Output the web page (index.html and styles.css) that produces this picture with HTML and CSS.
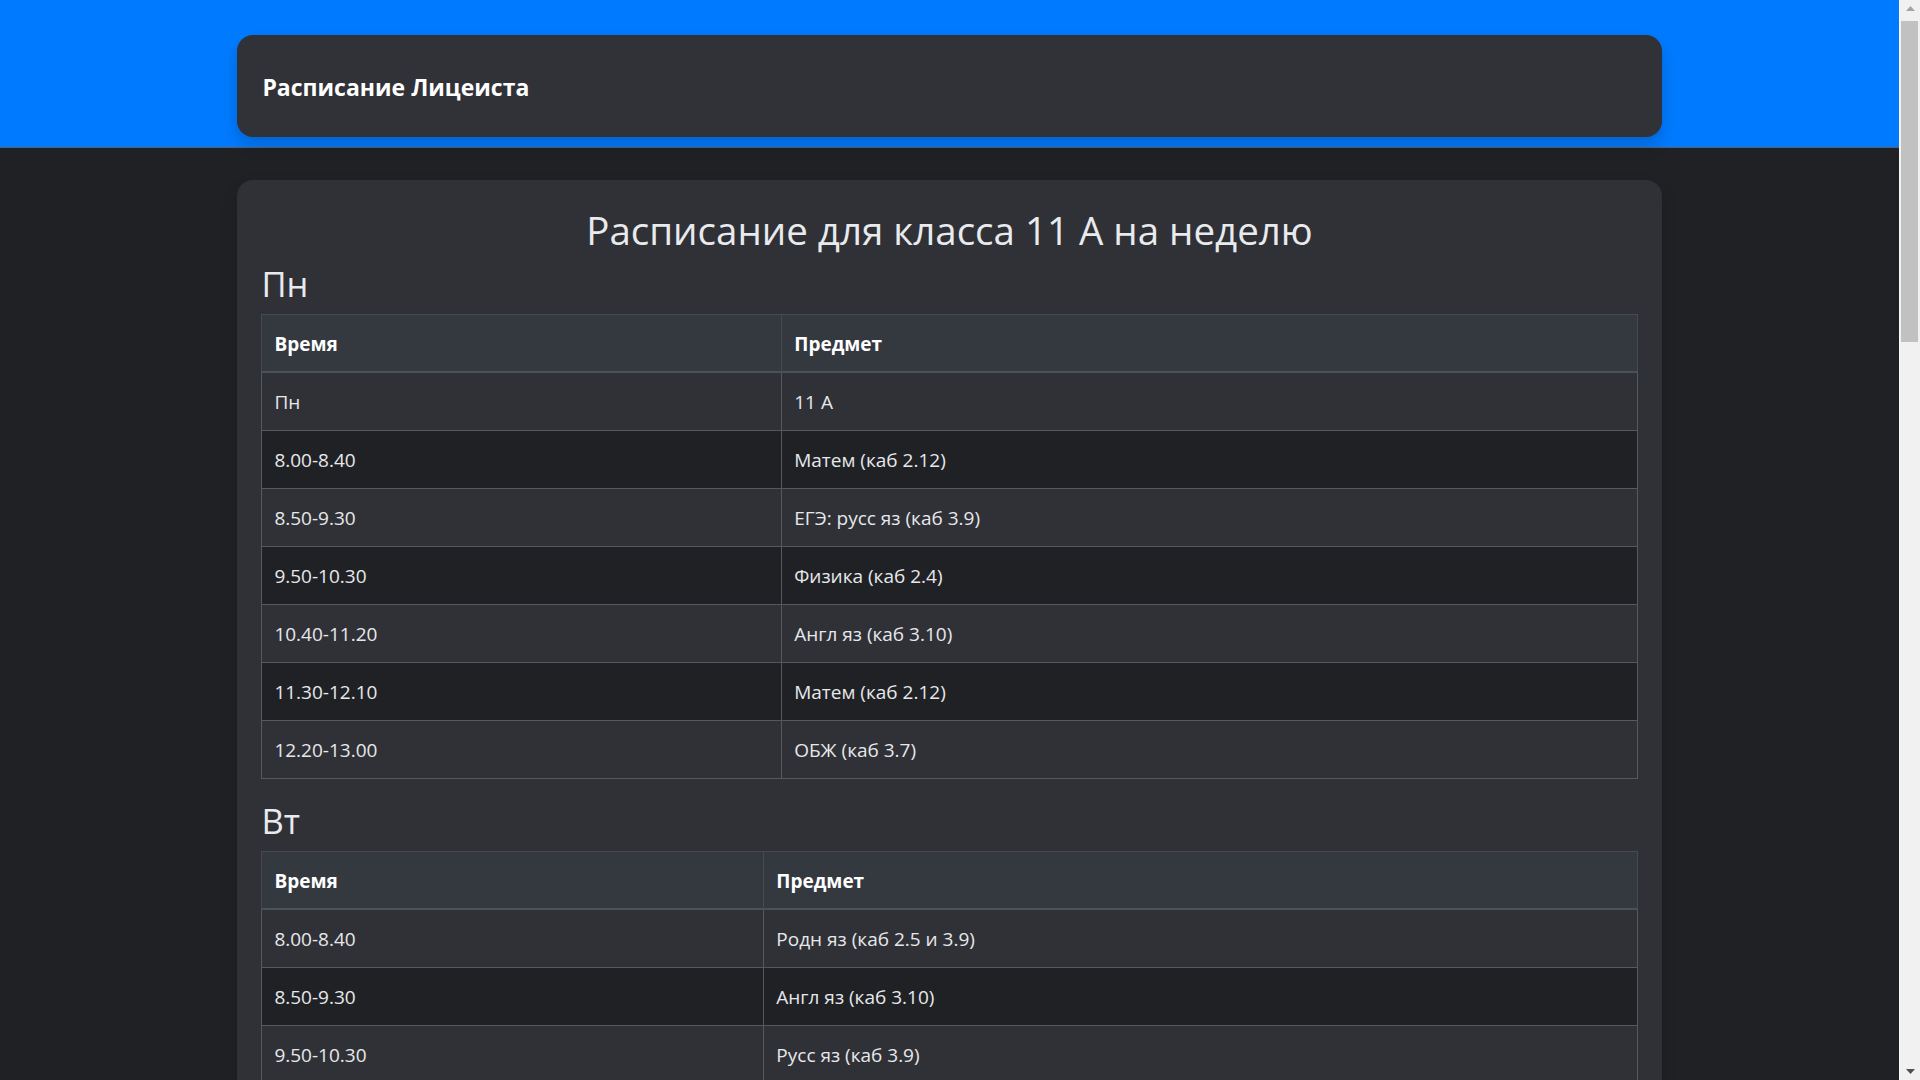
FILE: index.html
```html
<!DOCTYPE html>
<html lang="ru">
<head>
<meta charset="utf-8">
<title>Расписание Лицеиста</title>
<link rel="stylesheet" href="styles.css">
</head>
<body>
<div class="viewport">
<div class="page">
<header class="topbar">
  <div class="brand-card">
    <span class="brand">Расписание Лицеиста</span>
  </div>
</header>
<main class="sheet">
  <h1 class="title">Расписание для класса 11 А на неделю</h1>

  <h2 class="day">Пн</h2>
  <table class="sched">
    <colgroup><col class="c-mon"><col></colgroup>
    <thead><tr><th>Время</th><th>Предмет</th></tr></thead>
    <tbody>
      <tr><td>Пн</td><td>11 А</td></tr>
      <tr><td>8.00-8.40</td><td>Матем (каб 2.12)</td></tr>
      <tr><td>8.50-9.30</td><td>ЕГЭ: русс яз (каб 3.9)</td></tr>
      <tr><td>9.50-10.30</td><td>Физика (каб 2.4)</td></tr>
      <tr><td>10.40-11.20</td><td>Англ яз (каб 3.10)</td></tr>
      <tr><td>11.30-12.10</td><td>Матем (каб 2.12)</td></tr>
      <tr><td>12.20-13.00</td><td>ОБЖ (каб 3.7)</td></tr>
    </tbody>
  </table>

  <h2 class="day">Вт</h2>
  <table class="sched">
    <colgroup><col class="c-tue"><col></colgroup>
    <thead><tr><th>Время</th><th>Предмет</th></tr></thead>
    <tbody>
      <tr><td>8.00-8.40</td><td>Родн яз (каб 2.5 и 3.9)</td></tr>
      <tr><td>8.50-9.30</td><td>Англ яз (каб 3.10)</td></tr>
      <tr><td>9.50-10.30</td><td>Русс яз (каб 3.9)</td></tr>
      <tr><td>10.40-11.20</td><td>Матем (каб 2.12)</td></tr>
      <tr><td>11.30-12.10</td><td>История (каб 3.5)</td></tr>
      <tr><td>12.20-13.00</td><td>Физра</td></tr>
    </tbody>
  </table>

  <h2 class="day">Ср</h2>
  <table class="sched">
    <colgroup><col class="c-tue"><col></colgroup>
    <thead><tr><th>Время</th><th>Предмет</th></tr></thead>
    <tbody>
      <tr><td>8.00-8.40</td><td>Химия (каб 2.6)</td></tr>
      <tr><td>8.50-9.30</td><td>Матем (каб 2.12)</td></tr>
      <tr><td>9.50-10.30</td><td>Литература (каб 3.9)</td></tr>
      <tr><td>10.40-11.20</td><td>Биология (каб 2.7)</td></tr>
      <tr><td>11.30-12.10</td><td>Информатика (каб 3.1)</td></tr>
      <tr><td>12.20-13.00</td><td>Обществознание (каб 3.5)</td></tr>
    </tbody>
  </table>

  <h2 class="day">Чт</h2>
  <table class="sched">
    <colgroup><col class="c-tue"><col></colgroup>
    <thead><tr><th>Время</th><th>Предмет</th></tr></thead>
    <tbody>
      <tr><td>8.00-8.40</td><td>Физика (каб 2.4)</td></tr>
      <tr><td>8.50-9.30</td><td>Матем (каб 2.12)</td></tr>
      <tr><td>9.50-10.30</td><td>Англ яз (каб 3.10)</td></tr>
      <tr><td>10.40-11.20</td><td>Русс яз (каб 3.9)</td></tr>
      <tr><td>11.30-12.10</td><td>География (каб 3.4)</td></tr>
      <tr><td>12.20-13.00</td><td>Физра</td></tr>
    </tbody>
  </table>

  <h2 class="day">Пт</h2>
  <table class="sched">
    <colgroup><col class="c-tue"><col></colgroup>
    <thead><tr><th>Время</th><th>Предмет</th></tr></thead>
    <tbody>
      <tr><td>8.00-8.40</td><td>Литература (каб 3.9)</td></tr>
      <tr><td>8.50-9.30</td><td>Матем (каб 2.12)</td></tr>
      <tr><td>9.50-10.30</td><td>История (каб 3.5)</td></tr>
      <tr><td>10.40-11.20</td><td>Химия (каб 2.6)</td></tr>
      <tr><td>11.30-12.10</td><td>Англ яз (каб 3.10)</td></tr>
      <tr><td>12.20-13.00</td><td>Астрономия (каб 2.4)</td></tr>
    </tbody>
  </table>

  <h2 class="day">Сб</h2>
  <table class="sched">
    <colgroup><col class="c-tue"><col></colgroup>
    <thead><tr><th>Время</th><th>Предмет</th></tr></thead>
    <tbody>
      <tr><td>8.00-8.40</td><td>Матем (каб 2.12)</td></tr>
      <tr><td>8.50-9.30</td><td>Физика (каб 2.4)</td></tr>
      <tr><td>9.50-10.30</td><td>Информатика (каб 3.1)</td></tr>
      <tr><td>10.40-11.20</td><td>Русс яз (каб 3.9)</td></tr>
      <tr><td>11.30-12.10</td><td>Обществознание (каб 3.5)</td></tr>
    </tbody>
  </table>
</main>
</div>
<div class="scrollbar" aria-hidden="true">
  <div class="sb-btn"><svg width="9" height="5" viewBox="0 0 9 5"><polygon points="4.5,0 9,5 0,5" fill="#a3a3a3"/></svg></div>
  <div class="sb-track">
    <div class="sb-thumb"></div>
  </div>
  <div class="sb-btn"><svg width="9" height="5" viewBox="0 0 9 5"><polygon points="0,0 9,0 4.5,5" fill="#505050"/></svg></div>
</div>
</div>
</body>
</html>
```

FILE: styles.css
```css
html, body {
  margin: 0;
  padding: 0;
  height: 100%;
  overflow: hidden;
}

body {
  background: #202125;
  color: #dee2e6;
  font-family: "Open Sans", "Noto Sans", "Liberation Sans", sans-serif;
  font-size: 16px;
  line-height: 1.5;
}

.viewport {
  display: flex;
  height: 100vh;
}

.page {
  flex: 1;
  min-width: 0;
  overflow: hidden;
}

.scrollbar {
  width: 21px;
  flex: none;
  background: #f1f1f1;
  border-left: 1px solid #f8f8f8;
  box-sizing: border-box;
  display: flex;
  flex-direction: column;
}

.sb-btn {
  height: 17px;
  display: flex;
  align-items: center;
  justify-content: center;
}

.sb-track {
  flex: 1;
  padding: 4px 2px 0 1px;
}

.sb-thumb {
  height: 321px;
  background: #c1c1c1;
}

.topbar {
  background: #007bff;
  padding: 35px 0 10px;
  border-bottom: 1px solid #5a5f66;
}

.brand-card {
  width: 75%;
  margin: 0 auto;
  box-sizing: border-box;
  background: #313237;
  border-radius: 16px;
  padding: 3px 25px 0;
  height: 102px;
  display: flex;
  align-items: center;
  box-shadow: 0 8px 16px rgba(0, 0, 0, 0.18);
}

.brand {
  color: #ffffff;
  font-size: 23px;
  font-weight: 700;
  line-height: 1.2;
}

.sheet {
  width: 75%;
  margin: 32px auto 32px;
  box-sizing: border-box;
  background: #303136;
  border-radius: 16px;
  padding: 26px 24px 8px;
  box-shadow: 0 8px 16px rgba(0, 0, 0, 0.15);
}

.title {
  margin: 0 0 8px;
  font-size: 38.5px;
  font-weight: 500;
  line-height: 48px;
  text-align: center;
  color: #e8eaed;
}

.day {
  margin: 0 0 8px;
  font-size: 34.5px;
  font-weight: 500;
  line-height: 44px;
  color: #e8eaed;
}

.sched {
  width: 100%;
  border-collapse: collapse;
  table-layout: fixed;
  margin-bottom: 20px;
  font-size: 19px;
  line-height: 30px;
  border: 1px solid #4f5357;
}

.c-mon { width: 37.8%; }
.c-tue { width: 36.5%; }

.sched th,
.sched td {
  text-align: left;
  padding: 13.5px 12px;
  border: 1px solid #55585c;
}

.sched thead th {
  background: #343940;
  color: #ffffff;
  font-weight: 700;
  border-color: #454a51;
  border-bottom: 2px solid #4c5157;
  padding-bottom: 12.5px;
}

.sched tbody tr:nth-child(odd) td {
  background: #303136;
}

.sched tbody tr:nth-child(even) td {
  background: #202125;
}

.sched td {
  color: #e6e8eb;
}
```
